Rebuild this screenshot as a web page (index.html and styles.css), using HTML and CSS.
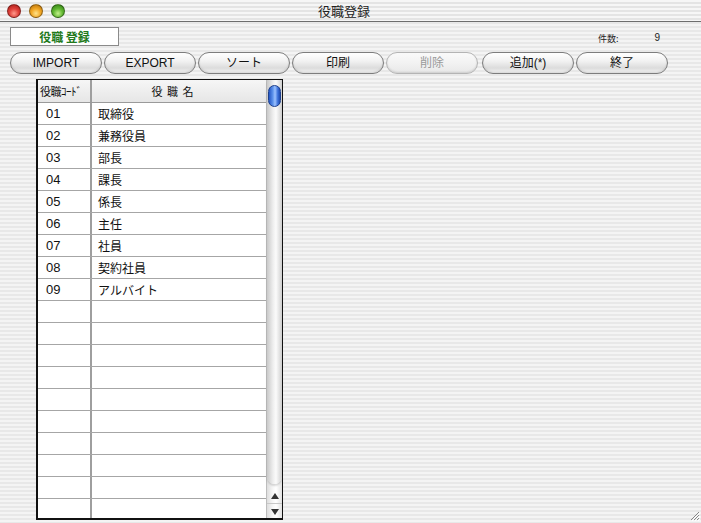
FILE: index.html
```html
<!DOCTYPE html>
<html lang="ja">
<head>
<meta charset="utf-8">
<title>役職登録</title>
<link rel="stylesheet" href="styles.css">
</head>
<body>
<div class="window">
  <div class="titlebar">
    <div class="lights">
      <span class="light red"></span>
      <span class="light yellow"></span>
      <span class="light green"></span>
    </div>
    <div class="title">役職登録</div>
  </div>
  <div class="content">
    <div class="header">
      <div class="label">役職 登録</div>
      <div class="count"><span class="count-label">件数:</span><span class="count-num">9</span></div>
    </div>
    <div class="buttons">
      <button class="btn">IMPORT</button>
      <button class="btn">EXPORT</button>
      <button class="btn">ソート</button>
      <button class="btn">印刷</button>
      <button class="btn disabled">削除</button>
      <button class="btn gap">追加(*)</button>
      <button class="btn">終了</button>
    </div>
    <div class="list">
      <div class="grid">
        <div class="row head"><div class="c1">役職ｺｰﾄﾞ</div><div class="c2 hname">役 職 名</div></div>
        <div class="row"><div class="c1">01</div><div class="c2">取締役</div></div>
        <div class="row"><div class="c1">02</div><div class="c2">兼務役員</div></div>
        <div class="row"><div class="c1">03</div><div class="c2">部長</div></div>
        <div class="row"><div class="c1">04</div><div class="c2">課長</div></div>
        <div class="row"><div class="c1">05</div><div class="c2">係長</div></div>
        <div class="row"><div class="c1">06</div><div class="c2">主任</div></div>
        <div class="row"><div class="c1">07</div><div class="c2">社員</div></div>
        <div class="row"><div class="c1">08</div><div class="c2">契約社員</div></div>
        <div class="row"><div class="c1">09</div><div class="c2">アルバイト</div></div>
        <div class="row"><div class="c1"></div><div class="c2"></div></div>
        <div class="row"><div class="c1"></div><div class="c2"></div></div>
        <div class="row"><div class="c1"></div><div class="c2"></div></div>
        <div class="row"><div class="c1"></div><div class="c2"></div></div>
        <div class="row"><div class="c1"></div><div class="c2"></div></div>
        <div class="row"><div class="c1"></div><div class="c2"></div></div>
        <div class="row"><div class="c1"></div><div class="c2"></div></div>
        <div class="row"><div class="c1"></div><div class="c2"></div></div>
        <div class="row"><div class="c1"></div><div class="c2"></div></div>
        <div class="row"><div class="c1"></div><div class="c2"></div></div>
      </div>
      <div class="scroll">
        <div class="track"><div class="thumb"></div></div>
        <div class="arrows">
          <div class="arrow up"></div>
          <div class="arrow down"></div>
        </div>
      </div>
    </div>
  </div>
  <svg class="grip" width="12" height="12" viewBox="0 0 12 12">
    <path d="M11 3 L3 11 M11 6 L6 11 M11 9 L9 11" stroke="#888" stroke-width="1"/>
    <path d="M12 4 L4 12 M12 7 L7 12 M12 10 L10 12" stroke="#fff" stroke-width="1"/>
  </svg>
</div>
</body>
</html>
```
FILE: styles.css
```css
* { box-sizing: border-box; }
html, body { margin: 0; padding: 0; }
body {
  width: 701px;
  height: 523px;
  overflow: hidden;
  font-family: "Liberation Sans", "Noto Sans CJK JP", sans-serif;
  color: #111;
}
.window {
  position: relative;
  width: 701px;
  height: 523px;
  background: repeating-linear-gradient(180deg, #f4f4f4 0 2px, #e8e8e8 2px 4px);
}
.titlebar {
  position: relative;
  height: 22px;
  border-bottom: 1px solid #6e6e6e;
  background: repeating-linear-gradient(180deg, #f6f6f6 0 2px, #e4e4e4 2px 4px);
  display: flex;
  align-items: center;
}
.lights {
  display: flex;
  gap: 8px;
  padding-left: 7px;
}
.light {
  width: 14px;
  height: 14px;
  border-radius: 50%;
  display: block;
  border: 1px solid rgba(0,0,0,0.35);
}
.red { background: radial-gradient(circle at 50% 70%, #ff9a8c 0, #e0413a 45%, #a51914 100%); }
.yellow { background: radial-gradient(circle at 50% 70%, #ffe38a 0, #f2a826 45%, #b26b05 100%); }
.green { background: radial-gradient(circle at 50% 70%, #c4f08c 0, #62b832 45%, #2e7a12 100%); }
.title {
  flex: 1;
  text-align: center;
  font-family: "Noto Sans CJK JP", sans-serif;
  font-size: 13px;
  color: #222;
  margin-right: 78px;
}
.content {
  padding: 5px 0 0 10px;
}
.header {
  display: flex;
  align-items: center;
  height: 19px;
}
.label {
  width: 109px;
  height: 19px;
  border: 1px solid #8a8a8a;
  background: #fff;
  color: #237a1c;
  font-family: "Noto Sans CJK JP", sans-serif;
  font-weight: bold;
  font-size: 12px;
  line-height: 17px;
  text-align: center;
}
.count {
  margin-left: auto;
  width: 110px;
  display: flex;
  font-family: "Noto Sans CJK JP", sans-serif;
  font-size: 9px;
  color: #222;
  padding-top: 3px;
}
.count-label { margin-left: 7px; }
.count-num { margin-left: 36px; font-family: "Liberation Sans", sans-serif; font-size: 10px; }
.buttons {
  display: flex;
  gap: 2px;
  margin-top: 6px;
  height: 23px;
}
.btn {
  width: 92px;
  height: 22px;
  border-radius: 11px;
  border: 1px solid #7d7d7d;
  background: linear-gradient(180deg, #ffffff 0%, #f2f2f2 40%, #dcdcdc 75%, #f4f4f4 100%);
  box-shadow: inset 0 -1px 2px rgba(0,0,0,0.12);
  font-family: "Liberation Sans", "Noto Sans CJK JP", sans-serif;
  font-size: 12px;
  color: #111;
  padding: 0;
  line-height: 20px;
}
.btn.disabled {
  color: #9a9a9a;
  border-color: #b4b4b4;
  background: linear-gradient(180deg, #fafafa 0%, #f2f2f2 50%, #e8e8e8 100%);
}
.btn.gap { margin-left: 2px; }
.list {
  margin-left: 26px;
  margin-top: 4px;
  width: 247px;
  height: 441px;
  border: 1px solid #111;
  border-left-width: 2px;
  border-bottom-width: 2px;
  display: flex;
  background: #fff;
  overflow: hidden;
}
.grid {
  width: 228px;
  height: 100%;
  overflow: hidden;
}
.row {
  display: flex;
  height: 22px;
  border-bottom: 1px solid #a6a6a6;
  font-family: "Noto Sans CJK JP", sans-serif;
  font-size: 12px;
  line-height: 21px;
}
.row.head {
  height: 23px;
  line-height: 22px;
  background: linear-gradient(180deg, #f6f6f6, #e6e6e6);
  font-size: 11px;
  border-bottom-color: #9a9a9a;
}
.c1 {
  width: 54px;
  border-right: 2px solid #9e9e9e;
  padding-left: 8px;
  font-family: "Liberation Sans", "Noto Sans CJK JP", sans-serif;
  font-size: 13px;
}
.head .c1 {
  padding-left: 2px;
  font-family: "Noto Sans CJK JP", sans-serif;
  font-size: 11px;
  letter-spacing: -0.5px;
}
.c2 {
  flex: 1;
  padding-left: 6px;
}
.c2.hname {
  text-align: center;
  padding-left: 0;
  padding-right: 12px;
  letter-spacing: 1px;
}
.scroll {
  width: 16px;
  height: 100%;
  display: flex;
  flex-direction: column;
  border-left: 1px solid #bdbdbd;
  background: linear-gradient(90deg, #dedede, #f7f7f7 40%, #ffffff 60%, #e2e2e2);
}
.track {
  flex: 1;
  padding: 5px 1px 0 1px;
  border-radius: 0 0 8px 8px;
  background: linear-gradient(90deg, #c9c9c9, #eeeeee 40%, #fbfbfb 60%, #cfcfcf);
  box-shadow: 0 2px 2px rgba(0,0,0,0.15);
  margin-bottom: 4px;
}
.thumb {
  width: 13px;
  height: 22px;
  border-radius: 7px;
  border: 1px solid #1d3f8c;
  background: linear-gradient(90deg, #2456c4 0%, #5d93ec 35%, #9cc2ff 55%, #3a6fd8 80%, #1e4bb0 100%);
}
.arrows {
  height: 30px;
  display: flex;
  flex-direction: column;
}
.arrow {
  flex: 1;
  position: relative;
}
.arrow.up { border-bottom: 1px solid #c8c8c8; }
.arrow::after {
  content: "";
  position: absolute;
  left: 4px;
  top: 5px;
  border-left: 4px solid transparent;
  border-right: 4px solid transparent;
}
.arrow.up::after { border-bottom: 6px solid #333; }
.arrow.down::after { border-top: 6px solid #333; top: 5px; }
.grip {
  position: absolute;
  right: 1px;
  bottom: 2px;
}
```
